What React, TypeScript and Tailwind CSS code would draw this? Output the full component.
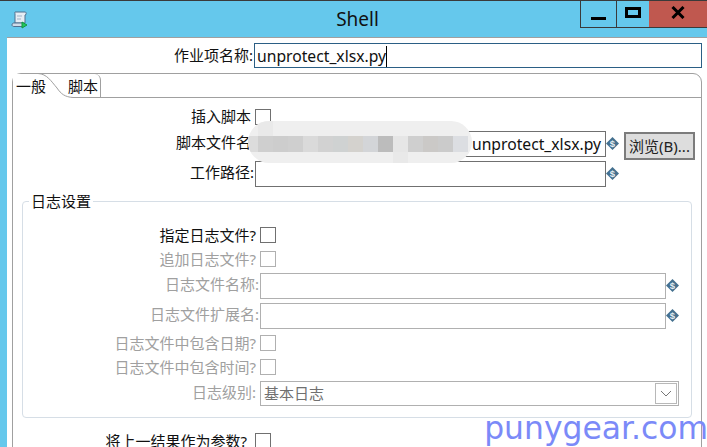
import React from "react";

const cjk = "font-['Noto_Sans','Noto_Sans_CJK_SC',sans-serif]";

function Dollar() {
  return (
    <svg width="13" height="13" viewBox="0 0 13 13" className="shrink-0 mt-[6px]">
      <polygon points="6.5,0 13,6.5 6.5,13 0,6.5" fill="#44708f" />
      <text x="6.5" y="10" textAnchor="middle" fontSize="9.5" fontWeight="700" fill="#e4edf3" fontFamily="Liberation Sans, sans-serif">
        $
      </text>
    </svg>
  );
}

function Check({ disabled }: { disabled?: boolean }) {
  return <div className={disabled ? "w-4 h-4 border border-[#b0b0b0] bg-white shrink-0" : "w-4 h-4 border border-[#707070] bg-white shrink-0"} />;
}

function Field({ width, disabled, children }: { width: string; disabled?: boolean; children?: React.ReactNode }) {
  return (
    <div className={`${width} h-[26px] border ${disabled ? "border-[#b0b0b0]" : "border-[#707070]"} bg-white flex items-center justify-end pt-px pr-[4px] text-[15.7px] text-[#111] shrink-0`}>
      {children}
    </div>
  );
}

function Label({ width, disabled, children }: { width: string; disabled?: boolean; children: React.ReactNode }) {
  return (
    <div className={`${width} text-right shrink-0 text-[15px] leading-[16px] whitespace-nowrap ${disabled ? "text-[#a0a0a0]" : "text-[#111]"}`}>
      {children}
    </div>
  );
}

export default function App() {
  return (
    <div className={`relative w-[707px] h-[447px] overflow-hidden bg-[#65c8ec] border-t border-[#3a3a3a] ${cjk}`}>
      {/* title bar */}
      <div className="relative h-[36px] flex items-start">
        <svg width="18" height="18" viewBox="0 0 18 18" className="ml-[11px] mt-[10px]">
          <path d="M4 1h10c1 0 1.500 1 1 2.500l-1 .5v8H4V3C4 2 3.500 1.500 4 1z" fill="#e6edf4" stroke="#51708f" />
          <path d="M1 14c0-1.500 1-2 2-2h9v2c0 1 .5 1.500 1 1.500H3c-1 0-2-.5-2-1.500z" fill="#cfdbe8" stroke="#51708f" />
          <path d="M6 5h5M6 8h4" stroke="#9fb3c8" />
          <polygon points="11,11 16,14 11,17" fill="#22c55e" stroke="#139a3f" />
        </svg>
        <div className="absolute inset-x-0 top-[5px] pl-[8px] text-center text-[19px] leading-[26px] text-[#111]">Shell</div>
        <div className="absolute right-0 top-0 flex h-[27px] border-b border-[#3a3a3a] border-l">
          <div className="w-[36px] flex justify-center items-end pb-[7px] border-r border-[#3a3a3a]">
            <div className="w-[15px] h-[3px] bg-black" />
          </div>
          <div className="w-[32px] flex justify-center items-center pb-[3px]">
            <div className="w-[16px] h-[11px] border-[3px] border-black" />
          </div>
          <div className="w-[58px] bg-[#c0584f] flex justify-center items-center pb-[3px]">
            <svg width="14" height="13" viewBox="0 0 14 13">
              <path d="M1.500 1l11 11M12.500 1l-11 11" stroke="#000" strokeWidth="3" />
            </svg>
          </div>
        </div>
      </div>

      {/* client area */}
      <div className="ml-[7px] h-[410px] bg-white border-t border-[#a0a0a0]">
        <div className="flex items-start mt-[5px]">
          <Label width="w-[246px] mt-[4px] mr-px">作业项名称:</Label>
          <div className="w-[448px] h-[25px] border border-[#2b5f85] flex items-center pl-[2px] pt-px text-[15.7px] text-[#111]">
            <span className="border-r border-black leading-[21px]">unprotect_xlsx.py</span>
          </div>
        </div>

        {/* tab folder */}
        <div className="relative ml-[5px] mt-[5px] w-[690px] h-[400px] border border-[#a0a0a0] rounded-t-[9px]">
          <div className="relative flex h-[24px] border-b border-[#a0a0a0] text-[15px] text-[#111]">
            <div className="w-[60px] h-[24px] pl-[3px] bg-white leading-[25px] whitespace-nowrap">一般</div>
            <div className="-ml-[5px] w-[33px] h-[23px] border-r border-[#a0a0a0] rounded-tr-[6px] leading-[25px] whitespace-nowrap">脚本</div>
            <svg width="40" height="25" viewBox="0 0 40 25" className="absolute left-[24px] -top-px">
              <path d="M1 0.500C10 1 14 8 20 15C24 21 28 24 36 24.500" fill="none" stroke="#a0a0a0" />
            </svg>
          </div>

          <div className="flex items-start mt-[11px]">
            <Label width="w-[238px] mr-[4px] mt-[-1px]">插入脚本</Label>
            <Check />
          </div>

          <div className="flex items-start mt-[6px] h-[26px]">
            <Label width="w-[238px] mr-[4px] mt-[3px]">脚本文件名</Label>
            <Field width="w-[351px]">unprotect_xlsx.py</Field>
            <Dollar />
            <button className="ml-[5px] mt-px w-[71px] h-[28px] border-2 border-[#7c7c7c] bg-[#dddddd] text-[15px] leading-[24px] text-[#222] whitespace-nowrap shrink-0">
              浏览(B)...
            </button>
          </div>

          <div className="flex items-start mt-[4px]">
            <Label width="w-[241px] mr-px mt-[3px]">工作路径:</Label>
            <Field width="w-[351px]" />
            <Dollar />
          </div>

          {/* log settings */}
          <div className="relative ml-[9px] mt-[14px] w-[670px] h-[217px] border border-[#d6dee6] rounded-[4px] pt-[25px]">
            <div className="absolute left-[6px] -top-[9px] bg-white px-[2px] text-[15px] leading-[16px] text-[#111]">日志设置</div>
            <div className="flex items-start">
              <Label width="w-[233px] mr-[4px]">指定日志文件?</Label>
              <Check />
            </div>
            <div className="flex items-start mt-[8px]">
              <Label width="w-[233px] mr-[4px]" disabled>追加日志文件?</Label>
              <Check disabled />
            </div>
            <div className="flex items-start mt-[6px]">
              <Label width="w-[236px] mr-px mt-[3px]" disabled>日志文件名称:</Label>
              <Field width="w-[406px]" disabled />
              <Dollar />
            </div>
            <div className="flex items-start mt-[4px]">
              <Label width="w-[236px] mr-px mt-[3px]" disabled>日志文件扩展名:</Label>
              <Field width="w-[406px]" disabled />
              <Dollar />
            </div>
            <div className="flex items-start mt-[6px]">
              <Label width="w-[233px] mr-[4px]" disabled>日志文件中包含日期?</Label>
              <Check disabled />
            </div>
            <div className="flex items-start mt-[8px]">
              <Label width="w-[233px] mr-[4px]" disabled>日志文件中包含时间?</Label>
              <Check disabled />
            </div>
            <div className="flex items-start mt-[6px]">
              <Label width="w-[233px] mr-[4px] mt-[3px]" disabled>日志级别:</Label>
              <div className="w-[419px] h-[25px] border border-[#b0b0b0] flex items-center justify-between pl-[3px] pr-px text-[15px] text-[#707070]">
                <span>基本日志</span>
                <div className="w-[22px] h-[21px] border border-[#b8b8b8] flex items-center justify-center">
                  <svg width="12" height="7" viewBox="0 0 12 7">
                    <path d="M1 1l5 5 5-5" fill="none" stroke="#777" />
                  </svg>
                </div>
              </div>
            </div>
          </div>

          <div className="flex items-start mt-[15px]">
            <Label width="w-[234px] mr-[8px]">将上一结果作为参数?</Label>
            <Check />
          </div>
        </div>
      </div>

      {/* blur smear over the script path */}
      <div className="absolute left-[248px] top-[120px] w-[224px] h-[42px] rounded-[21px] bg-[#efefef] flex items-start pt-[15px] overflow-hidden">
        {["bg-[#dcdcdc] w-[10px]", "bg-[#cfcfcf] w-[15px]", "bg-[#cdcdcd] w-[15px]", "bg-[#cfcfcf] w-[15px]", "bg-[#dadada] w-[15px]", "bg-[#d2d2d2] w-[15px]", "bg-[#cfd2d2] w-[15px]", "bg-[#d4d2ce] w-[15px]", "bg-[#d3d5d8] w-[15px]", "bg-[#bcbcbc] w-[15px]", "bg-[#e6e6e6] w-[15px]", "bg-[#cfcfcf] w-[15px]", "bg-[#cbc9c7] w-[15px]", "bg-[#cbcbcb] w-[15px]", "bg-[#dcdee2] w-[15px]"].map((c, i) => (
          <div key={i} className={`h-[16px] ${c}`} />
        ))}
        <div className="absolute left-[10px] top-0 w-[15px] h-[15px] bg-[#e9e9e9]" />
        <div className="absolute left-[145px] top-[31px] w-[15px] h-[11px] bg-[#e9e9e9]" />
      </div>

      {/* watermark */}
      <div className="absolute right-[-1px] top-[409px] text-[31.4px] leading-[36px] text-[#7b8af8] font-['DejaVu_Sans',sans-serif] whitespace-nowrap">
        punygear.com
      </div>
    </div>
  );
}
